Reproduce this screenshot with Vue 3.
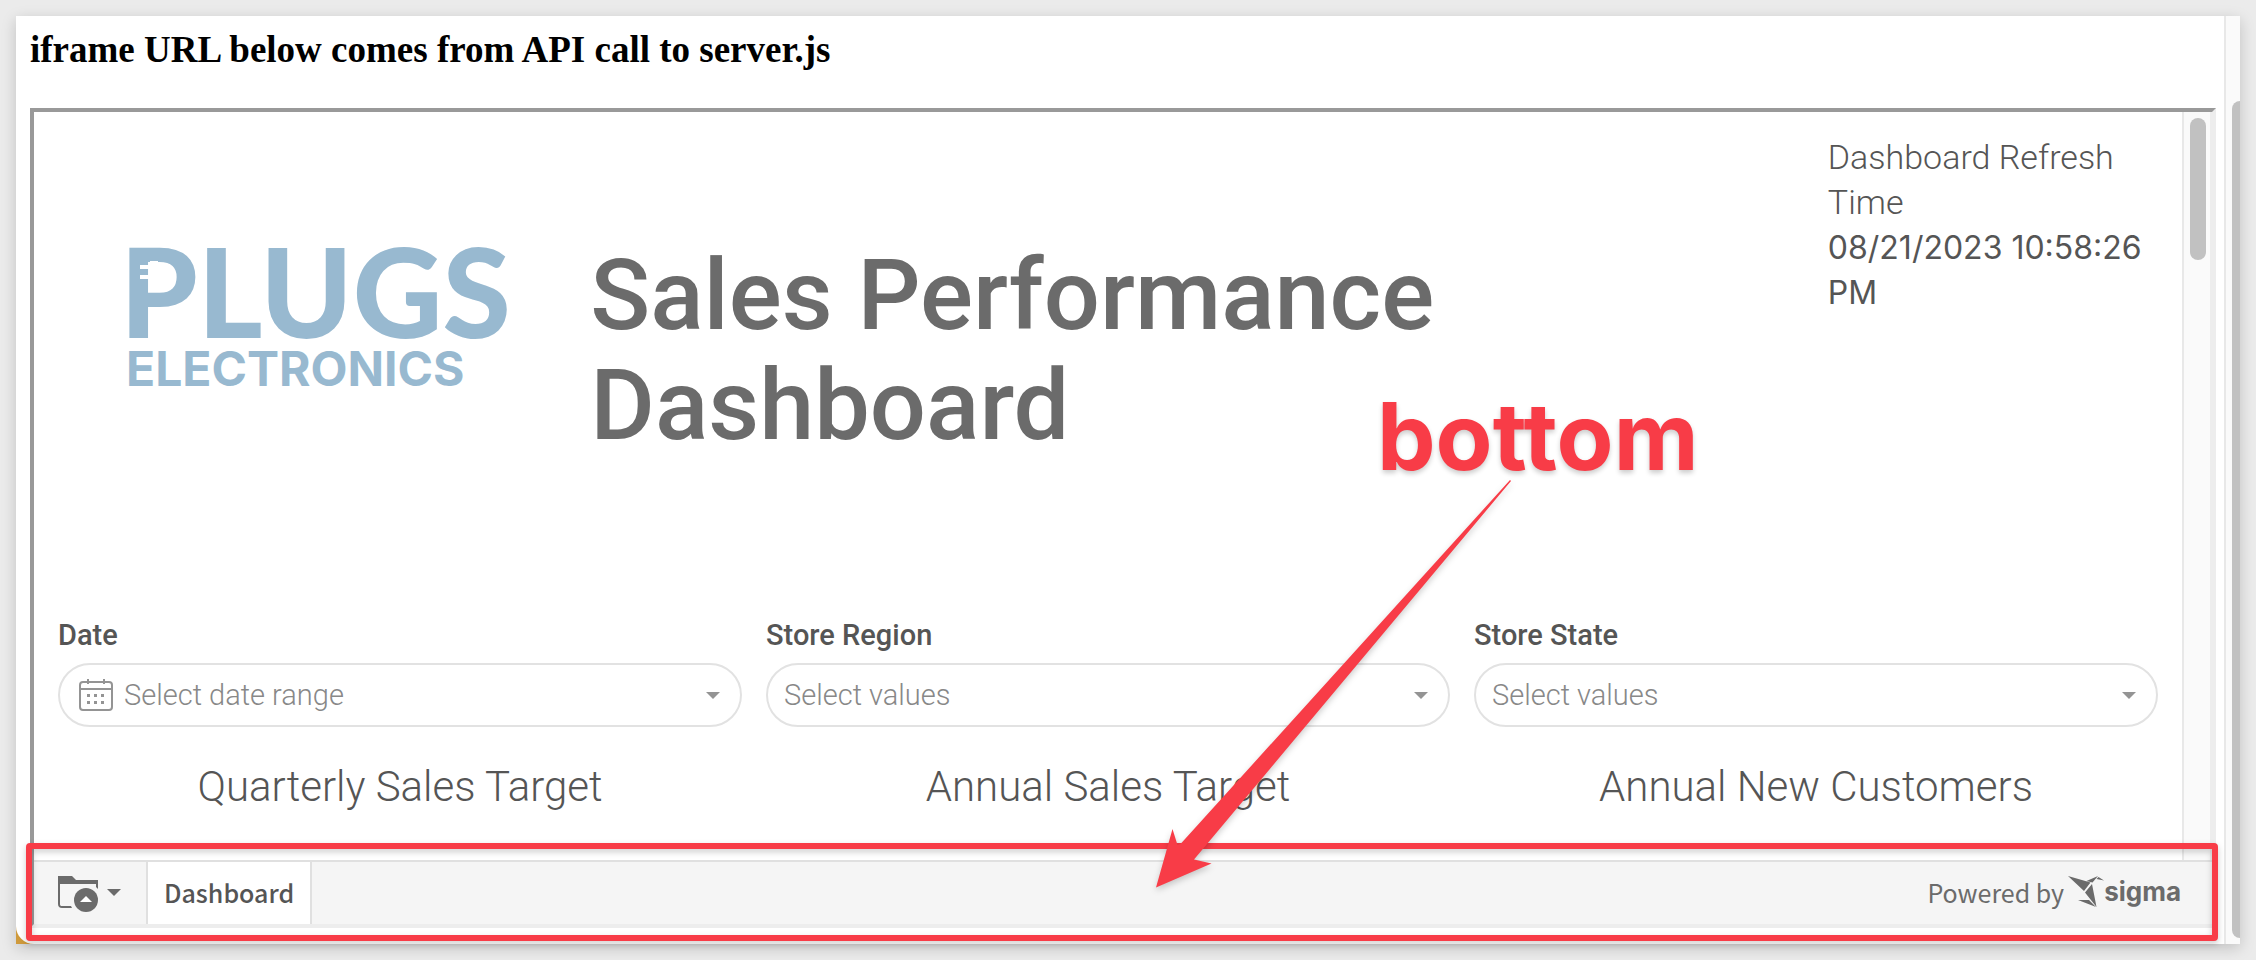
<script setup>
const filters = [
  { id: 'date', label: 'Date', placeholder: 'Select date range', title: 'Quarterly Sales Target', calendar: true },
  { id: 'region', label: 'Store Region', placeholder: 'Select values', title: 'Annual Sales Target', calendar: false },
  { id: 'state', label: 'Store State', placeholder: 'Select values', title: 'Annual New Customers', calendar: false },
]
</script>

<template>
  <div class="page">
    <div class="window">
      <main class="host">
        <h3 class="host-title">iframe URL below comes from API call to server.js</h3>

        <div class="embed">
          <div class="embed-body">
            <div class="canvas">
              <header class="hero">
                <div class="logo">
                  <div class="logo-main">
                    PLUGS
                    <svg class="plug" viewBox="0 0 18 22" aria-hidden="true">
                      <path d="M10 0h8v22h-8v-4H0v-4h10V8H0V4h10z" />
                    </svg>
                  </div>
                  <div class="logo-sub">ELECTRONICS</div>
                </div>
                <h1 class="title">Sales Performance Dashboard</h1>
                <p class="refresh">
                  Dashboard Refresh Time<br />
                  <span class="stamp">08/21/2023 10:58:26 PM</span>
                </p>
              </header>

              <section class="filters">
                <div v-for="f in filters" :key="f.id" class="filter">
                  <label :for="f.id" class="filter-label">{{ f.label }}</label>
                  <div class="pill">
                    <svg v-if="f.calendar" class="calendar" viewBox="0 0 34 32" aria-hidden="true">
                      <rect x="1" y="3" width="32" height="28" rx="3" fill="none" stroke="currentColor" stroke-width="2" />
                      <path d="M1 10h32M9 0v5M25 0v5" fill="none" stroke="currentColor" stroke-width="2" />
                      <path d="M8 15h3v3H8zM15 15h3v3h-3zM22 15h3v3h-3zM8 22h3v3H8zM15 22h3v3h-3zM22 22h3v3h-3z" fill="currentColor" />
                    </svg>
                    <select :id="f.id" class="select">
                      <option>{{ f.placeholder }}</option>
                    </select>
                    <svg class="caret" viewBox="0 0 14 7" aria-hidden="true"><path d="M0 0h14L7 7z" fill="currentColor" /></svg>
                  </div>
                  <h2 class="kpi">{{ f.title }}</h2>
                </div>
              </section>
            </div>
            <div class="scrollbar"><div class="thumb"></div></div>
          </div>

          <footer class="bar">
            <button class="folder" type="button" aria-label="Pages">
              <svg class="folder-icon" viewBox="0 0 40 36" aria-hidden="true">
                <path d="M0 0h14l4 4h22v9l-2-2V8H2v20c0 1.500.5 2 2 2h9l1 2H4c-2.500 0-4-1.500-4-4z" fill="currentColor" />
                <circle cx="28" cy="24" r="12" fill="currentColor" />
                <path d="M22 26h12l-6-6z" fill="#fff" />
              </svg>
              <svg class="caret" viewBox="0 0 14 7" aria-hidden="true"><path d="M0 0h14L7 7z" fill="currentColor" /></svg>
            </button>
            <button class="tab" type="button">Dashboard</button>
            <a class="powered" href="#">
              <span>Powered by</span>
              <svg class="bird" viewBox="0 0 36 32" aria-hidden="true">
                <path d="M0 0l22.500 6.500L16 15zM24 8l4.500 23L17 16.500zM10 24h11l7 7zM18.500 5L30 0l-5.500 6.500zM28.500 3l2-2 5.500 3.500z" fill="currentColor" />
              </svg>
              <span class="sigma">sigma</span>
            </a>
            <div class="highlight"></div>
          </footer>
        </div>
      </main>
      <div class="outer-scroll"><div class="outer-thumb"></div></div>
    </div>

    <div class="callout">bottom</div>
    <svg class="arrow" viewBox="0 0 356 408" aria-hidden="true">
      <path d="M354 0L24.500 364l-3 1-5-16L0 407.500l55.500-24-17.500-4L355 1z" fill="#f83c47" />
    </svg>
  </div>
</template>

<style>
body {
  margin: 0;
  background: #ebebeb;
}
</style>

<style scoped>
.page {
  position: relative;
  box-sizing: border-box;
  min-height: 100vh;
  padding: 16px;
  display: flex;
  background: #ebebeb;
  font-family: Roboto, "Liberation Sans", sans-serif;
  color: #555;
}
.window {
  flex: 1;
  display: flex;
  background: linear-gradient(45deg, #cf9a3c 20px, #fff 20px);
  box-shadow: 0 4px 14px rgba(0, 0, 0, 0.18);
}
.host {
  flex: 1;
  display: flex;
  flex-direction: column;
  padding: 12px 8px 16px 14px;
  background: #fff;
  border-bottom-left-radius: 18px;
}
.host-title {
  margin: 0 0 36px;
  font: bold 37px/44px "Liberation Serif", serif;
  color: #000;
}
.embed {
  flex: 1;
  display: flex;
  flex-direction: column;
  border: 4px solid;
  border-color: #999 #ededed #ededed #999;
}
.embed-body {
  flex: 1;
  display: flex;
}
.canvas {
  flex: 1;
  padding: 0 24px;
}
.hero {
  display: grid;
  grid-template-columns: 532fr 1237fr 330fr;
  height: 503px;
}
.logo {
  padding: 116px 0 0 62px;
  color: #98b9d0;
  font-family: Lato, sans-serif;
  font-weight: 900;
}
.logo-main {
  position: relative;
  font-size: 124px;
  line-height: 124px;
}
.plug {
  position: absolute;
  left: 20px;
  top: 33px;
  width: 18px;
  height: 22px;
  fill: #fff;
}
.logo-sub {
  margin: -7px 0 0 6px;
  font: 700 48px/48px Inter, sans-serif;
}
.title {
  max-width: 1100px;
  margin: 128px 0 0;
  font-size: 99px;
  font-weight: 500;
  line-height: 110px;
  color: #6b6b6b;
}
.refresh {
  margin: 23px 0 0;
  font-size: 34px;
  font-weight: 300;
  line-height: 45px;
}
.stamp {
  font-family: Inter, sans-serif;
  font-size: 32px;
  font-weight: 400;
}
.filters {
  display: grid;
  grid-template-columns: repeat(3, 1fr);
  gap: 24px;
}
.filter-label {
  display: block;
  font-size: 29px;
  font-weight: 500;
  line-height: 40px;
}
.pill {
  position: relative;
  display: flex;
  align-items: center;
  box-sizing: border-box;
  height: 64px;
  margin-top: 8px;
  padding: 0 20px 0 16px;
  border: 2px solid #e2e2e2;
  border-radius: 32px;
  color: #949494;
}
.calendar {
  width: 34px;
  height: 32px;
  margin: 0 11px 0 3px;
}
.select {
  flex: 1;
  height: 60px;
  padding: 0;
  border: 0;
  background: none;
  appearance: none;
  font: 300 29px/40px Roboto, sans-serif;
  color: #888;
}
.caret {
  width: 14px;
  height: 7px;
}
.kpi {
  margin: 35px 0 0;
  font-size: 42px;
  font-weight: 300;
  line-height: 50px;
  text-align: center;
}
.scrollbar {
  width: 26px;
  border-left: 2px solid #e8e8e8;
  border-right: 2px solid #ededed;
  background: #fafafa;
}
.thumb {
  width: 16px;
  height: 142px;
  margin: 6px;
  border-radius: 8px;
  background: #c1c1c1;
}
.bar {
  position: relative;
  display: flex;
  height: 62px;
  border-top: 2px solid #e0e0e0;
  background: #f5f5f5;
  font-family: "Noto Sans CJK SC", sans-serif;
}
.folder {
  display: flex;
  align-items: center;
  gap: 9px;
  padding: 2px 25px 0 24px;
  border: 0;
  background: none;
  color: #6b6b6b;
}
.folder-icon {
  width: 40px;
  height: 36px;
}
.folder .caret {
  margin-bottom: 4px;
}
.tab {
  padding: 0 16px 2px;
  border: solid #e0e0e0;
  border-width: 0 2px;
  background: #fff;
  font: 500 25px/58px "Noto Sans CJK SC", sans-serif;
  color: #555;
}
.powered {
  display: flex;
  align-items: center;
  margin-left: auto;
  padding: 0 31px 2px 0;
  font-size: 25px;
  line-height: 58px;
  color: #6b6b6b;
  text-decoration: none;
}
.bird {
  width: 36px;
  height: 32px;
  margin-left: 4px;
}
.sigma {
  font-family: Inter, sans-serif;
  font-weight: 700;
  font-size: 26px;
}
.highlight {
  position: absolute;
  top: -19px;
  right: -6px;
  bottom: -17px;
  left: -8px;
  border: 6px solid #f83c47;
  border-radius: 4px;
  filter: drop-shadow(0 3px 3px rgba(0, 0, 0, 0.2));
}
.outer-scroll {
  width: 14px;
  padding-top: 85px;
  border-left: 2px solid #e8e8e8;
  background: #fafafa;
}
.outer-thumb {
  height: calc(100% - 6px);
  margin-left: 6px;
  border-radius: 8px 0 0 8px;
  background: #c1c1c1;
}
.callout {
  position: absolute;
  left: 1377px;
  top: 381px;
  font: 700 93px/110px Inter, sans-serif;
  color: #f83c47;
  text-shadow: 0 3px 5px rgba(0, 0, 0, 0.2);
}
.arrow {
  position: absolute;
  left: 1156px;
  top: 480px;
  width: 356px;
  height: 408px;
  filter: drop-shadow(0 3px 3px rgba(0, 0, 0, 0.2));
}
</style>
